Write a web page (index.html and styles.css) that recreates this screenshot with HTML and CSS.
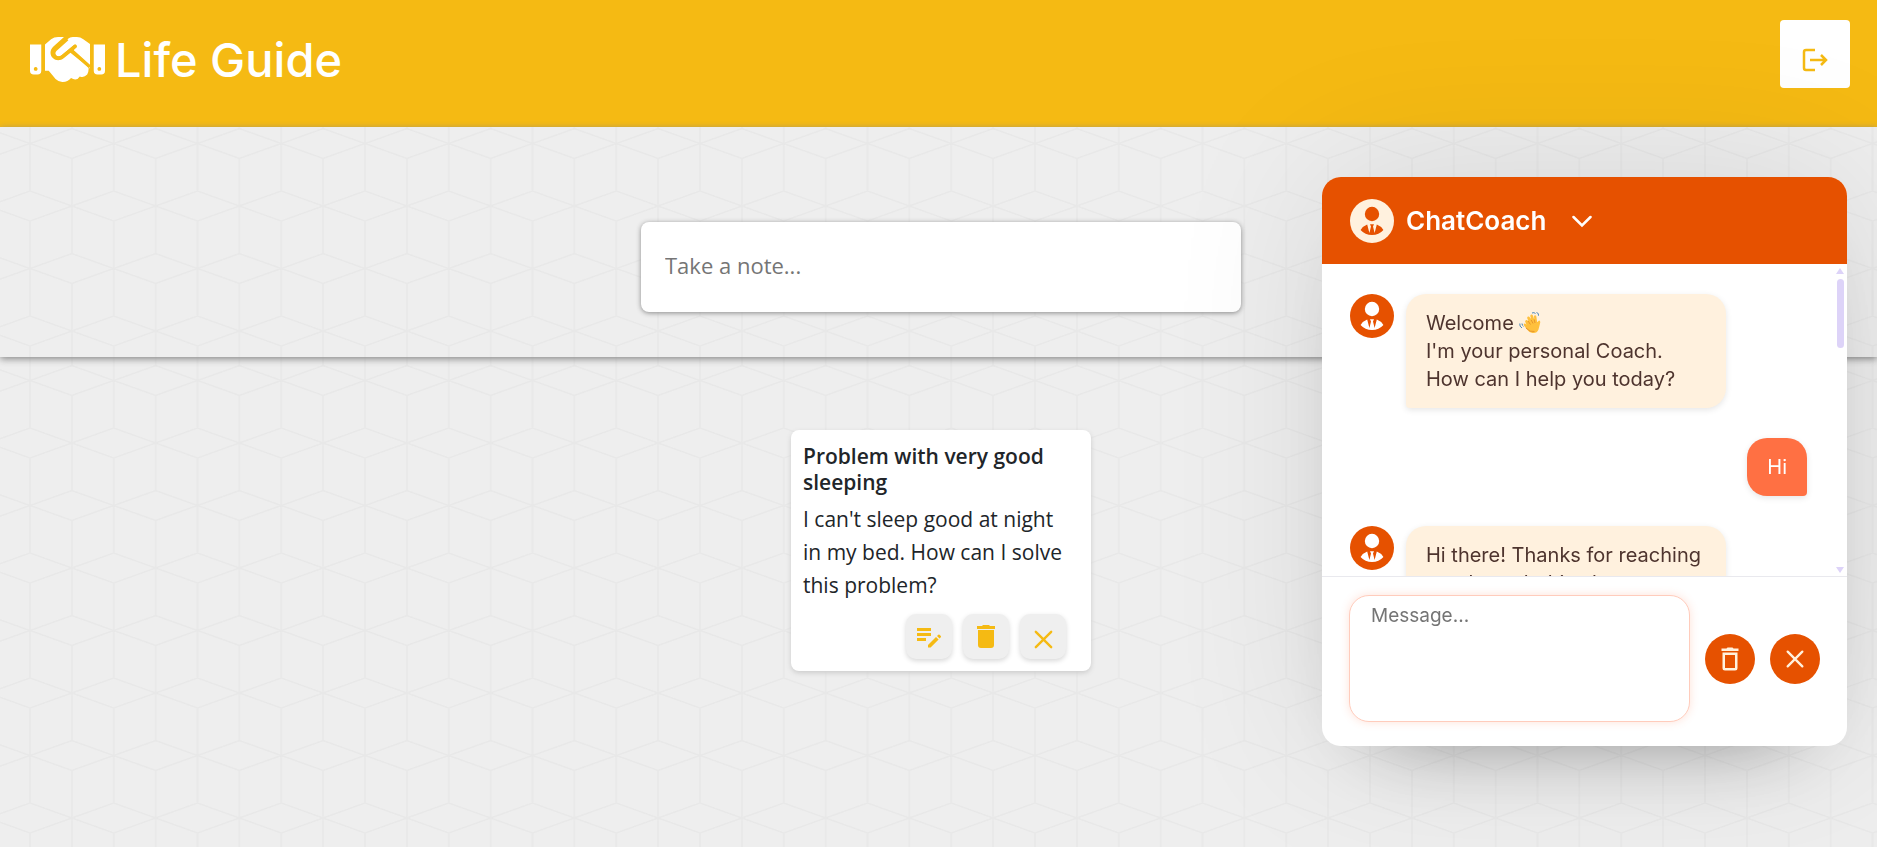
FILE: index.html
```html
<!DOCTYPE html>
<html lang="en">
<head>
<meta charset="UTF-8">
<title>Life Guide</title>
<link rel="stylesheet" href="styles.css">
</head>
<body>

<svg class="sprite" aria-hidden="true">
  <symbol id="person" viewBox="0 0 44 44">
    <circle cx="22" cy="15" r="7.2"></circle>
    <path d="M17.2 25.500 Q13 27 10.600 31 Q15 36 22 36 Q29 36 33.400 31 Q31 27 26.800 25.500 L24.600 34 L23 27.500 L24 25.300 H20 L21 27.500 L19.400 34 Z"></path>
  </symbol>
  <symbol id="close" viewBox="0 0 24 24">
    <path d="M4 4 20 20 M20 4 4 20" fill="none" stroke="currentColor" stroke-width="2.5" stroke-linecap="round"></path>
  </symbol>
</svg>

<header class="header">
  <a href="#" class="logo">
    <svg class="logo-icon" viewBox="0 0 640 384" aria-hidden="true">
      <path fill-rule="evenodd" d="M0 64h96v224q0 32-32 32H32q-32 0-32-32Z M48 257a16 16 0 1 0 1 0Z M544 64h96v224q0 32-32 32h-32q-32 0-32-32Z M591 257a16 16 0 1 0 1 0Z"></path>
      <path d="M128 64 L180 20 Q205 0 240 0 H290 L200 82 C165 115 170 155 195 180 C220 205 260 205 290 180 L345 134 L512 268 V60 L455 20 Q430 0 400 0 H365 Q340 0 325 14 L222 106 C205 122 205 140 218 154 C232 170 252 170 268 157 L376 66 Q386 58 396 68 Q406 80 396 90 L371 112 L490 225 Q512 275 488 320 Q460 350 425 336 Q398 380 350 350 Q320 385 275 384 Q240 380 218 358 L160 288 H128 Z"></path>
      <path class="logo-cut" d="M318 18 L216 110 C180 145 225 205 282 162 L388 76 M352 112 L512 256"></path>
    </svg>
    <span>Life Guide</span>
  </a>
  <button type="button" class="logout" aria-label="Log out">
    <svg width="26" height="24" viewBox="0 0 26 24" aria-hidden="true">
      <path d="M13 2H4Q2 2 2 4V20Q2 22 4 22H13 M8 12H24 M19 7l5 5l-5 5"></path>
    </svg>
  </button>
</header>

<section class="create">
  <form class="create-form">
    <input type="text" class="note-input" placeholder="Take a note..." aria-label="Take a note">
  </form>
</section>

<main class="notes">
  <article class="note">
    <h1>Problem with very good sleeping</h1>
    <p>I can't sleep good at night in my bed. How can I solve this problem?</p>
    <div class="note-actions">
      <button type="button" aria-label="Edit">
        <svg width="26" height="24" viewBox="0 0 26 24" aria-hidden="true">
          <path d="M1 3h14v3H1z M1 8h14v3H1z M1 13h9v3H1z M12 20l8-8l2.600 2.600l-8 8H12z M21 11l1.300-1.300q.7-.6 1.300 0l1.200 1.200q.6.700 0 1.300l-1.300 1.300z"></path>
        </svg>
      </button>
      <button type="button" aria-label="Delete">
        <svg width="24" height="26" viewBox="0 0 24 26" aria-hidden="true">
          <path d="M3 2h5l1-1h6L16 2h5v3H3z M4 6h16v15q0 3-3 3H7q-3 0-3-3z"></path>
        </svg>
      </button>
      <button type="button" class="note-close" aria-label="Close">
        <svg width="23" height="23"><use href="#close"></use></svg>
      </button>
    </div>
  </article>
</main>

<div class="chat">
  <div class="chat-header">
    <svg class="avatar avatar-light" aria-hidden="true"><use href="#person"></use></svg>
    <h2>ChatCoach</h2>
    <button type="button" class="chat-toggle" aria-label="Minimize chat">
      <svg width="22" height="14" viewBox="0 0 22 14" aria-hidden="true"><path d="M2.500 3 11 11.500 19.500 3"></path></svg>
    </button>
  </div>

  <div class="chat-body">
    <div class="messages">
      <div class="message">
        <svg class="avatar" aria-hidden="true"><use href="#person"></use></svg>
        <p class="bubble">Welcome <svg class="wave" viewBox="0 0 22 22" aria-hidden="true">
          <path d="M6.500 10.500 Q5.500 9 6.800 8.300 Q8 7.600 9 9 L10.500 11 L8.300 6.500 Q7.800 5 9 4.500 Q10.200 4.200 10.900 5.500 L12.500 8.500 L11.300 4 Q11.200 2.600 12.300 2.400 Q13.500 2.300 13.900 3.600 L15.200 7.500 L15 4.300 Q15.200 3.100 16.200 3.200 Q17.300 3.400 17.400 4.700 L18 9.500 Q18.200 10.500 19 9.500 Q20.200 8 21 9 Q21.600 10 20.900 12 L19.500 17.500 Q18 21.500 13.500 21 Q10 20.500 8 17.500 L5 13.500 Q4.300 12.200 5.300 11.600 Q6.200 11.200 7 12.100 L9 14 Z" fill="#ffc03d"></path>
          <path d="M7 11 L12 6 L18 9 L19 16 L14 20 L9 17 Z" fill="#ffc03d"></path>
          <path d="M9 9 11.500 12.500 M12.200 8 14 11.500 M15.200 7.500 16 11 M7 16 Q11 20.500 15.500 19.500" fill="none" stroke="#e8962e"></path>
          <path d="M13 1q2-1 3.500.5 M17.500.5q2.500.5 2 3.200 M.8 11.500q-.5 3 2.200 4.500 M3 11.500q0 2 1.500 2.800" fill="none" stroke="#4a86b8"></path>
        </svg><br>I'm your personal Coach.<br>How can I help you today?</p>
      </div>
      <div class="message message-user">
        <p class="bubble">Hi</p>
      </div>
      <div class="message">
        <svg class="avatar" aria-hidden="true"><use href="#person"></use></svg>
        <p class="bubble">Hi there! Thanks for reaching out through this chat.</p>
      </div>
    </div>
    <div class="rail" aria-hidden="true">
      <span class="arrow-up"></span>
      <span class="thumb"></span>
      <span class="arrow-down"></span>
    </div>
  </div>

  <form class="chat-footer">
    <textarea placeholder="Message..." aria-label="Message"></textarea>
    <button type="button" class="round" aria-label="Clear chat">
      <svg width="24" height="26" viewBox="0 0 24 26" aria-hidden="true">
        <path fill-rule="evenodd" d="M3.500 2.500H8.500L9.500 1.500h5l1 1h5V5h-17z M4.500 6.500h15V22q0 2.500-2.500 2.500H7q-2.500 0-2.500-2.500z M7 9v13h10V9z"></path>
      </svg>
    </button>
    <button type="button" class="round" aria-label="Close chat">
      <svg width="22" height="22"><use href="#close"></use></svg>
    </button>
  </form>
</div>

</body>
</html>
```
FILE: styles.css
```css
* {
  box-sizing: border-box;
}

body {
  margin: 0;
  min-height: 100vh;
  display: flex;
  flex-direction: column;
  font-family: "Segoe UI", "Open Sans", sans-serif;
  color: #212529;
}

button {
  display: flex;
  align-items: center;
  justify-content: center;
  padding: 0;
  border: none;
  cursor: pointer;
}

svg {
  fill: currentColor;
}

.sprite {
  position: absolute;
  width: 0;
  height: 0;
}

/* header */
.header {
  display: flex;
  justify-content: space-between;
  align-items: flex-start;
  height: 127px;
  padding: 20px 27px 0 30px;
  background-color: #f5ba13;
}

.logo {
  display: flex;
  align-items: center;
  gap: 10px;
  height: 78px;
  color: white;
  font-family: Inter, sans-serif;
  font-size: 47px;
  font-weight: 500;
  text-decoration: none;
}

.logo-icon {
  width: 75px;
  height: 45px;
}

.logo-cut {
  fill: none;
  stroke: #f5ba13;
  stroke-width: 28px;
}

.logout {
  width: 70px;
  height: 68px;
  padding-top: 12px;
  border-radius: 4px;
  background-color: white;
  color: #f5ba13;
}

.logout path {
  fill: none;
  stroke: currentColor;
  stroke-width: 2.500px;
}

/* cube pattern behind both sections */
.create, .notes {
  background-color: #eee;
  background-image: url("data:image/svg+xml,%3Csvg xmlns='http://www.w3.org/2000/svg' viewBox='0 0 336 125' preserveAspectRatio='none'%3E%3Cpattern id='p' width='84' height='125' patternUnits='userSpaceOnUse'%3E%3Cpath d='M0 62.500 42 47.500 84 62.500 42 77.500Z M-42 0 0 -15 42 0 0 15Z M42 0 84 -15 126 0 84 15Z M-42 125 0 110 42 125 0 140Z M42 125 84 110 126 125 84 140Z M42 0V47.500 M42 77.500V125 M0 15V110 M84 15V110' fill='none' stroke='%23e8e8e8' stroke-width='1.500'/%3E%3C/pattern%3E%3Crect width='336' height='125' fill='url(%23p)'/%3E%3C/svg%3E");
  background-size: 335px 125px;
}

.create {
  position: relative;
  padding: 95px 0 45px 5px;
  background-position: 30px -46px;
  box-shadow: 0 2px 7px #888;
}

.create-form {
  width: 600px;
  margin: 0 auto;
}

.note-input {
  display: block;
  width: 100%;
  height: 90px;
  padding: 0 24px 5px;
  border: none;
  border-radius: 8px;
  background-color: white;
  box-shadow: 0 1px 5px #8a8a8a;
  font-family: inherit;
  font-size: 22px;
}

.note-input::placeholder, .chat-footer textarea::placeholder {
  color: #757575;
}

.notes {
  flex: 1;
  padding: 73px 0 0 5px;
  background-position: 30px -39px;
}

.note {
  width: 300px;
  margin: 0 auto;
  padding: 13px 25px 12px 12px;
  border-radius: 8px;
  background-color: white;
  box-shadow: 0 2px 5px #ccc;
}

.note h1 {
  margin: 0 0 8px;
  font-size: 21px;
  font-weight: 600;
  line-height: 26px;
}

.note p {
  margin: 0 0 12px;
  font-size: 21px;
  line-height: 33px;
}

.note-actions {
  display: flex;
  justify-content: flex-end;
  gap: 11px;
}

.note-actions button {
  width: 46px;
  height: 45px;
  border-radius: 10px;
  background-color: #efefef;
  box-shadow: 0 2px 5px #d8d8d8;
  color: #f5ba13;
}

.note-actions .note-close {
  padding-top: 6px;
}

/* chat window */
.chat {
  position: fixed;
  right: 30px;
  top: 177px;
  width: 525px;
  overflow: hidden;
  border-radius: 19px;
  background-color: white;
  box-shadow: 0 0 160px rgba(0, 0, 0, 0.1), 0 40px 80px -60px rgba(0, 0, 0, 0.5);
  font-family: Inter, sans-serif;
}

.chat-header {
  display: flex;
  align-items: center;
  height: 87px;
  padding: 0 28px;
  background-color: #e65100;
  color: white;
}

.chat-header h2 {
  margin: 0 25px 0 12px;
  font-size: 26px;
  font-weight: 600;
}

.chat-toggle {
  background: none;
  color: white;
}

.chat-toggle path {
  fill: none;
  stroke: currentColor;
  stroke-width: 2.500px;
  stroke-linecap: round;
}

.avatar {
  flex: none;
  width: 44px;
  height: 44px;
  border-radius: 50%;
  background-color: #e65100;
  color: white;
}

.avatar-light {
  background-color: #fff1de;
  color: #e65100;
}

.chat-body {
  display: flex;
  height: 312px;
}

.messages {
  flex: 1;
  display: flex;
  flex-direction: column;
  gap: 30px;
  overflow: hidden;
  padding: 30px 28px 0;
}

.message {
  display: flex;
  gap: 12px;
}

.message-user {
  justify-content: flex-end;
}

.bubble {
  width: 320px;
  margin: 0;
  padding: 15px 20px;
  border-radius: 20px 20px 20px 4px;
  background-color: #fff1de;
  box-shadow: 0 2px 6px rgba(0, 0, 0, 0.1);
  color: #4e342e;
  font-size: 20px;
  line-height: 28px;
}

.message-user .bubble {
  width: auto;
  border-radius: 20px 20px 4px 20px;
  background-color: #ff7043;
  color: white;
}

.wave {
  width: 22px;
  height: 22px;
  vertical-align: -4px;
}

.rail {
  display: flex;
  flex-direction: column;
  align-items: center;
  width: 12px;
  padding: 4px 2px 3px 0;
}

.arrow-up {
  border: 4px solid transparent;
  border-top: none;
  border-bottom: 6px solid #ddd3f8;
}

.thumb {
  width: 7px;
  height: 69px;
  margin: 5px 0 auto;
  border-radius: 4px;
  background-color: #ddd3f8;
}

.arrow-down {
  border: 4px solid transparent;
  border-bottom: none;
  border-top: 6px solid #ddd3f8;
}

.chat-footer {
  display: flex;
  align-items: center;
  gap: 15px;
  padding: 18px 27px 24px;
  border-top: 1px solid #e9e9ee;
}

.chat-footer textarea {
  flex: 1;
  height: 127px;
  padding: 8px 21px;
  border: 1px solid #ffccbc;
  border-radius: 20px;
  box-shadow: 0 0 10px rgba(255, 112, 67, 0.2);
  font-family: inherit;
  font-size: 19px;
  resize: none;
}

.round {
  width: 50px;
  height: 50px;
  border-radius: 50%;
  background-color: #e65100;
  color: #fff1de;
}
```
